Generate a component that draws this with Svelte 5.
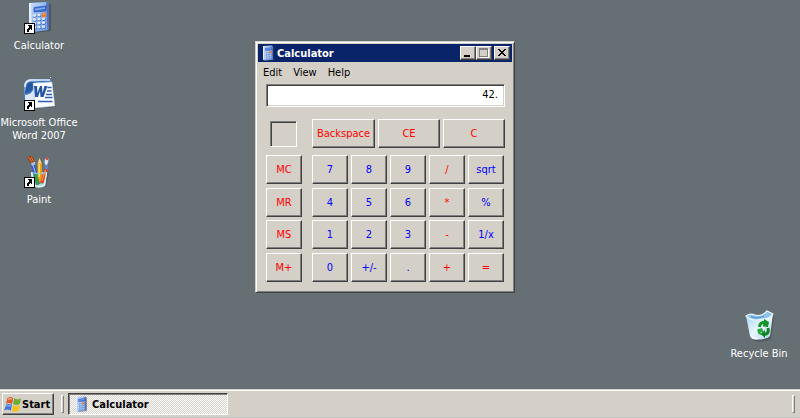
<script>
  let display = $state('42.');
  const menus = ['Edit', 'View', 'Help'];
  const memory = ['MC', 'MR', 'MS', 'M+'];
  const keys = [
    '7', '8', '9', '/', 'sqrt',
    '4', '5', '6', '*', '%',
    '1', '2', '3', '-', '1/x',
    '0', '+/-', '.', '+', '='
  ];
  const operators = ['/', '*', '-', '+', '='];
</script>

{#snippet calcIcon(id, size, box)}
  <svg width={size} height={size} viewBox={box} aria-hidden="true">
    <defs>
      <linearGradient id="body-{id}" x1="0" y1="0" x2="1" y2="1">
        <stop offset="0" stop-color="#cfe2fc" />
        <stop offset=".5" stop-color="#8db3f0" />
        <stop offset="1" stop-color="#6a9ae8" />
      </linearGradient>
    </defs>
    <path d="M10 4 29 4 29 31 12 33z" fill="#3c444a" opacity=".55" />
    <path d="M7 3 24 2 27 3 27 30 11 32 7 30z" fill="url(#body-{id})" />
    <path d="M24 2 27 3 27 30 25.500 30.300z" fill="#5273bb" />
    <path d="M7 3 9 3 10 31.500 7 30z" fill="#e4efff" />
    <path d="M12 7.500 24 6 24 11 12 12z" fill="#3f70d4" stroke="#2c56b0" stroke-width=".7" />
    <path d="M13 9.500 23 8" stroke="#86aef4" stroke-width="1.500" />
    {#each [14, 18, 22, 26] as y}
      {#each [11.5, 16, 20.5] as x, c}
        <ellipse cx={x + 1.400} cy={y + 2 - c * 0.4} rx="1.900" ry="1.700" fill="#4a6db9" />
        <ellipse cx={x + 1} cy={y + 1.500 - c * 0.4} rx="1.700" ry="1.400" fill="#dce9fe" />
      {/each}
    {/each}
    <circle cx="22" cy="15" r="2.400" fill="#f07a2c" />
    <path d="M21 14h1.500" stroke="#ffc090" />
  </svg>
{/snippet}

{#snippet shortcut()}
  <svg class="shortcut" width="11" height="11" viewBox="0 0 11 11" shape-rendering="crispEdges" aria-hidden="true">
    <path d="M0 0h11v11H0z" fill="#000" />
    <path d="M1 1h9v9H1z" fill="#fff" />
    <path d="M4 2h4v5H7V6H6v1H5v2H3V6h1V5h1V4H5V3H4z" fill="#000" />
  </svg>
{/snippet}

<div class="screen">
  <main class="desktop">
    <nav class="icons" aria-label="Desktop">
      <a class="item" href="#calculator">
        <span class="pic">{@render calcIcon('desktop', 34, '0 0 34 34')}{@render shortcut()}</span>
        <span>Calculator</span>
      </a>
      <a class="item" href="#word">
        <span class="pic">
          <svg width="34" height="34" viewBox="0 0 34 34" aria-hidden="true">
            <defs>
              <linearGradient id="wordBlue" x1="0" y1="0" x2="1" y2="1">
                <stop offset="0" stop-color="#a9c9ef" />
                <stop offset=".4" stop-color="#356bb8" />
                <stop offset="1" stop-color="#b9d5f3" />
              </linearGradient>
            </defs>
            <path d="M2 10Q2 2 9 2H29V29H2z" fill="url(#wordBlue)" />
            <path d="M3 10Q3 3 9 3H28" fill="none" stroke="#e2effc" stroke-width="1.500" />
            <path d="M3 17Q12 14 14 5H9Q4 5 4 11z" fill="#2457a6" />
            <path d="M3 24V18Q11 17 12 10L13 24z" fill="#dbe9f8" />
            <path d="M12 7 31 8 34 30 13 32z" fill="#3f4a54" opacity=".5" />
            <path d="M11 6 30 5 33 29 13 31z" fill="#fafcff" stroke="#a9bed8" stroke-width=".5" />
            <path d="M12 9h3l.5 7 2.500-7h2l.5 7 2-7h3l-4 11h-3l-.5-6-2 6h-3z" fill="#2655a3" />
            <path d="M25.500 10.500h4M25 14h4.500M24 17.500h6M23 20.500h7.500M16 24.500h14.500" stroke="#2f5fae" stroke-width="1.600" />
            <path d="M28 0h1v1h-1z" fill="#fff" />
          </svg>
          {@render shortcut()}
        </span>
        <span>Microsoft Office Word 2007</span>
      </a>
      <a class="item" href="#paint">
        <span class="pic">
          <svg width="34" height="34" viewBox="0 0 34 34" aria-hidden="true">
            <path d="M12 19H27L24 33H14z" fill="#3f474c" opacity=".5" />
            <path d="M9 18H25L23 32Q17 35 11 32z" fill="#b9dce2" />
            <path d="M11 20H23L21.500 30H12.500z" fill="#86b6bc" />
            <path d="M9 11 13 9 16 20 18 30H14L11 19z" fill="#3a58b8" />
            <path d="M11 11 14 21" stroke="#92aaf0" stroke-width="1.200" />
            <path d="M12 19H15L17 31H14z" fill="#2fa244" />
            <path d="M5 3 8 2 11 3 13 8 9 9.500Q6 7 5 3z" fill="#9c4118" />
            <path d="M6.500 3 10 8M9 3 11.500 7" stroke="#d9824a" />
            <path d="M9 9 13 7.500 13.500 10.500 10 12z" fill="#a9bbe0" />
            <path d="M17.500 4 20 10V23L18 30 15.500 23V10z" fill="#e89f10" />
            <path d="M17.200 10V23" stroke="#ffe265" stroke-width="1.500" />
            <path d="M17.500 4 19.600 9.500H15.700z" fill="#f4d59a" />
            <path d="M22.500 15 26 15.500 21.500 29H18z" fill="#df4317" />
            <path d="M23.500 16 20 27" stroke="#ff8652" stroke-width="1.300" />
            <path d="M22.500 15 22.500 8 26 8.500 26 15.500z" fill="#6384bd" />
            <path d="M23 4.500 25 3 27 5 26 10 23.500 12 22 8z" fill="#dfe9f5" stroke="#5675a9" stroke-width=".7" />
            <path d="M23 4.500 25 3 27 5 25 6.500z" fill="#c8503b" />
            <path d="M9 18.500Q17 21.500 25 18.500" fill="none" stroke="#8fd3dc" />
            <path d="M9.500 18.500 11.500 31.500Q17 34 22.500 31.500L24.500 18.500" fill="none" stroke="#e6fbff" stroke-width="1.300" />
          </svg>
          {@render shortcut()}
        </span>
        <span>Paint</span>
      </a>
    </nav>

    <section class="window" id="calculator" aria-label="Calculator">
      <header class="titlebar">
        {@render calcIcon('title', 16, '1 1 32 32')}
        <h1>Calculator</h1>
        <div class="controls">
          <button class="raised" aria-label="Minimize">
            <svg width="12" height="10" shape-rendering="crispEdges"><path d="M2 7h6v2H2z" fill="#000" /></svg>
          </button>
          <button class="raised" aria-label="Maximize" disabled>
            <svg width="12" height="10" shape-rendering="crispEdges">
              <path d="M2 1h9v9H2z" fill="#fff" />
              <path d="M1 0h9v9H1zM2 2v6h7V2z" fill="#808080" fill-rule="evenodd" />
              <path d="M2 2h7v6H2z" fill="#d4d0c8" />
            </svg>
          </button>
          <button class="raised close" aria-label="Close">
            <svg width="12" height="10" shape-rendering="crispEdges">
              <path d="M2 1h2v1h1v1h2V2h1V1h2v1H9v1H8v1H7v1h1v1h1v1h1v1H8V7H7V6H5v1H4v1H2V7h1V6h1V5h1V4H4V3H3V2H2z" fill="#000" />
            </svg>
          </button>
        </div>
      </header>
      <div class="menubar">
        {#each menus as m}<button>{m}</button>{/each}
      </div>
      <div class="panel">
        <input class="display" aria-label="Display" bind:value={display} readonly />
        <div class="top">
          <div class="flagcell"><div class="flag"></div></div>
          <div class="wide">
            {#each ['Backspace', 'CE', 'C'] as k}<button class="key raised red">{k}</button>{/each}
          </div>
        </div>
        <div class="pad">
          <div class="memory">
            {#each memory as k}<button class="key raised red">{k}</button>{/each}
          </div>
          <div class="digits">
            {#each keys as k}
              <button class="key raised" class:red={operators.includes(k)}>{k}</button>
            {/each}
          </div>
        </div>
      </div>
    </section>

    <a class="item bin" href="#recycle">
      <span class="pic">
        <svg width="34" height="34" viewBox="0 0 34 34" aria-hidden="true">
          <defs>
            <linearGradient id="glass" x1="0" y1="0" x2="1" y2="1">
              <stop offset="0" stop-color="#9fd0f2" />
              <stop offset=".5" stop-color="#eaf7ff" />
              <stop offset="1" stop-color="#a4cdea" />
            </linearGradient>
          </defs>
          <path d="M8 10 32 8 29 31Q20 35 12 33z" fill="#3a4349" opacity=".5" />
          <path d="M4 8 31 6 28 28Q24 32 13 31.500 9 31 8 28z" fill="url(#glass)" />
          <path d="M4 8Q8 5 13 7 20 9 25 3L31 6Q28 11 20 11 10 14 4 8z" fill="#8cc2ea" />
          <path d="M9 9Q16 11 22 8" fill="none" stroke="#5d9fd6" stroke-width="1.500" />
          <path d="M4 8Q8 5 13 7 20 9 25 3L31 6Q28 11 20 11 10 14 4 8z" fill="none" stroke="#e8f8ff" stroke-width="1.200" />
          <path d="M8 27Q11 30 17 30L15 31.500Q10 31.500 8 27z" fill="#f8feff" />
          <path d="M17.500 19Q18 14 23 14.500" fill="none" stroke="#159327" stroke-width="3" />
          <path d="M22 11 27 14 26 19 21 18.500z" fill="#159327" />
          <path d="M15 21.500 20 20 21.500 24 18.500 24 19.500 27 16.500 26z" fill="#23aa39" />
          <path d="M26 20Q27.500 26 22 26.500" fill="none" stroke="#0f8421" stroke-width="3" />
          <path d="M23 22V30L18.500 26z" fill="#0f8421" />
        </svg>
      </span>
      <span>Recycle Bin</span>
    </a>
  </main>

  <footer class="taskbar">
    <button class="start raised">
      <svg width="17" height="17" viewBox="1 1 15 15" aria-hidden="true">
        <path d="M5 4Q8 2 10 4L9 9.500Q6 7 4 9.500z" transform="translate(-1 -1)" fill="#40484e" opacity=".5" />
        <path d="M4 3Q7 1 9 3L8 8Q5 6 3 8z" fill="#e8572a" />
        <path d="M10 3Q13 5 16 3L15 8Q12 10 9 8z" fill="#6dad32" />
        <path d="M3 9Q5 7 8 9L7 14Q4 12 1 14z" fill="#3d73d8" />
        <path d="M9 9Q12 11 15 9L14 14Q11 16 8 14z" fill="#f3c21c" />
        <path d="M4.500 4Q7 2.500 8 4" stroke="#ffac83" fill="none" />
        <path d="M3.500 10Q5 9 7 10" stroke="#8db5ff" fill="none" />
      </svg>
      Start
    </button>
    <span class="grip"></span>
    <button class="task">{@render calcIcon('task', 16, '1 1 32 32')}Calculator</button>
    <span class="grip end"></span>
  </footer>
</div>

<style>
  :global(body) {
    margin: 0;
  }
  .screen {
    display: flex;
    flex-direction: column;
    min-height: 100vh;
    background: #666f74;
    color: #000;
    font: 11px/13px 'DejaVu Sans Condensed', 'DejaVu Sans', sans-serif;
  }
  button,
  input {
    box-sizing: border-box;
    margin: 0;
    padding: 0;
    border: 0;
    border-radius: 0;
    background: none;
    color: inherit;
    font: inherit;
  }
  svg {
    display: block;
    flex: none;
  }
  .desktop {
    position: relative;
    flex: 1;
  }
  .icons {
    display: grid;
    grid-auto-rows: 77px;
    width: 78px;
  }
  .item {
    display: flex;
    flex-direction: column;
    align-items: center;
    gap: 5px;
    width: 78px;
    color: #fff;
    text-align: center;
    text-decoration: none;
  }
  .pic {
    position: relative;
  }
  .shortcut {
    position: absolute;
    left: 2px;
    bottom: 0;
  }
  .bin {
    position: absolute;
    right: 2px;
    bottom: 29px;
  }

  .raised {
    background: #d4d0c8;
    border: 1px solid;
    border-color: #fff #404040 #404040 #fff;
    box-shadow: inset -1px -1px #808080;
  }
  .window {
    position: absolute;
    left: 255px;
    top: 41px;
    box-sizing: border-box;
    width: 260px;
    padding: 2px;
    border: 1px solid;
    border-color: #d4d0c8 #404040 #404040 #d4d0c8;
    background: #d4d0c8;
    box-shadow: inset 1px 1px #fff, inset -1px -1px #808080;
  }
  .titlebar {
    display: flex;
    align-items: center;
    height: 18px;
    gap: 1px;
    padding: 0 2px;
    background: #0a246a;
    color: #fff;
  }
  h1 {
    flex: 1;
    margin: 0;
    font: inherit;
    font-weight: bold;
  }
  .controls {
    display: flex;
  }
  .controls button {
    width: 16px;
    height: 14px;
    padding: 1px;
  }
  .controls .close {
    margin-left: 2px;
  }
  .menubar {
    display: flex;
    height: 20px;
    gap: 11px;
    padding: 0 5px;
  }
  .panel {
    padding: 2px 7px 8px 8px;
  }
  .display {
    display: block;
    width: 100%;
    height: 23px;
    padding: 0 6px 3px;
    border: 1px solid;
    border-color: #808080 #fff #fff #808080;
    background: #fff;
    box-shadow: inset 1px 1px #404040, inset -1px -1px #d4d0c8;
    text-align: right;
  }
  .top,
  .pad {
    display: flex;
    gap: 10px;
  }
  .top {
    margin: 12px 0 7px;
  }
  .flagcell {
    display: flex;
    align-items: center;
    box-sizing: border-box;
    width: 36px;
    padding-left: 4px;
  }
  .flag {
    box-sizing: border-box;
    width: 27px;
    height: 26px;
    border: 1px solid;
    border-color: #808080 #fff #fff #808080;
    box-shadow: inset 1px 1px #404040;
  }
  .wide {
    display: grid;
    grid-template-columns: 63px 1fr 1fr;
    flex: 1;
    gap: 3px;
  }
  .memory,
  .digits {
    display: grid;
    align-content: space-between;
    height: 127px;
  }
  .memory {
    grid-template-columns: 36px;
  }
  .digits {
    grid-template-columns: repeat(5, 36px);
    column-gap: 3px;
  }
  .key {
    height: 29px;
    color: #00f;
  }
  .red {
    color: #f00;
  }

  .taskbar {
    display: flex;
    align-items: center;
    box-sizing: border-box;
    height: 29px;
    padding: 1px 5px 0 2px;
    border-top: 1px solid #d4d0c8;
    border-bottom: 1px solid #c0c0c0;
    background: #d4d0c8;
    box-shadow: inset 0 1px #fff;
    font-weight: bold;
  }
  .start {
    display: flex;
    align-items: center;
    width: 52px;
    height: 22px;
    gap: 1px;
    padding-left: 1px;
  }
  .grip {
    box-sizing: border-box;
    width: 3px;
    height: 18px;
    margin: 0 4px 0 7px;
    border: 1px solid;
    border-color: #fff #808080 #808080 #fff;
  }
  .task {
    display: flex;
    align-items: center;
    width: 160px;
    height: 22px;
    gap: 3px;
    padding-left: 4px;
    border: 1px solid;
    border-color: #404040 #fff #fff #404040;
    background: repeating-conic-gradient(#fff 0 25%, #d4d0c8 0 50%) 0 0 / 2px 2px;
    box-shadow: inset 1px 1px #808080;
  }
  .end {
    margin: 0 0 0 auto;
  }
</style>
